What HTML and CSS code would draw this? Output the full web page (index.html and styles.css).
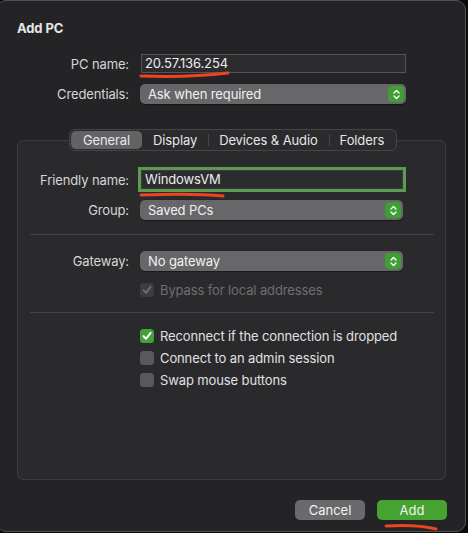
FILE: index.html
```html
<!DOCTYPE html>
<html>
<head>
<meta charset="utf-8">
<link rel="stylesheet" href="styles.css">
</head>
<body>
<div class="window">
  <h1 class="title">Add PC</h1>

  <div class="form top-form">
    <span class="label">PC name:</span>
    <div class="field">20.57.136.254</div>
    <span class="label">Credentials:</span>
    <div class="popup">Ask when required
      <span class="stepper"><svg width="15" height="15" viewBox="0 0 15 15"><path d="M5 6 L7.5 3.6 L10 6 M5 9 L7.5 11.4 L10 9" fill="none" stroke="#fff" stroke-width="1.4" stroke-linecap="round" stroke-linejoin="round"/></svg></span>
    </div>
  </div>

  <div class="tabs">
    <span class="tab selected">General</span>
    <span class="tab">Display</span>
    <span class="tab sep">Devices &amp; Audio</span>
    <span class="tab sep">Folders</span>
  </div>

  <div class="groupbox">
    <div class="form">
      <span class="label">Friendly name:</span>
      <div class="field focused">WindowsVM</div>
      <span class="label">Group:</span>
      <div class="popup">Saved PCs
        <span class="stepper"><svg width="15" height="15" viewBox="0 0 15 15"><path d="M5 6 L7.5 3.6 L10 6 M5 9 L7.5 11.4 L10 9" fill="none" stroke="#fff" stroke-width="1.4" stroke-linecap="round" stroke-linejoin="round"/></svg></span>
      </div>
    </div>
    <hr class="sep-line first">
    <div class="form">
      <span class="label">Gateway:</span>
      <div class="popup">No gateway
        <span class="stepper"><svg width="15" height="15" viewBox="0 0 15 15"><path d="M5 6 L7.5 3.6 L10 6 M5 9 L7.5 11.4 L10 9" fill="none" stroke="#fff" stroke-width="1.4" stroke-linecap="round" stroke-linejoin="round"/></svg></span>
      </div>
      <span></span>
      <div class="check disabled"><span class="box on"><svg width="14" height="14" viewBox="0 0 14 14"><path d="M3.5 7.3 L6 9.8 L10.6 3.8" fill="none" stroke="#6c6c6e" stroke-width="2" stroke-linecap="round" stroke-linejoin="round"/></svg></span>Bypass for local addresses</div>
    </div>
    <hr class="sep-line second">
    <div class="checks">
      <div class="check"><span class="box on green"><svg width="14" height="14" viewBox="0 0 14 14"><path d="M3.5 7.3 L6 9.8 L10.6 3.8" fill="none" stroke="#fff" stroke-width="2" stroke-linecap="round" stroke-linejoin="round"/></svg></span>Reconnect if the connection is dropped</div>
      <div class="check"><span class="box"></span>Connect to an admin session</div>
      <div class="check"><span class="box"></span>Swap mouse buttons</div>
    </div>
  </div>

  <div class="buttons">
    <button class="btn">Cancel</button>
    <button class="btn primary">Add</button>
  </div>

  <svg class="scribble s1" width="100" height="10" viewBox="0 0 100 10"><path d="M2 6 C 30 7, 60 6.5, 89 3" fill="none" stroke="#ee4420" stroke-width="3" stroke-linecap="round"/></svg>
  <svg class="scribble s2" width="100" height="10" viewBox="0 0 100 10"><path d="M2 4 C 30 3, 60 2.5, 84 5" fill="none" stroke="#ee4420" stroke-width="3" stroke-linecap="round"/></svg>
  <svg class="scribble s3" width="60" height="10" viewBox="0 0 60 10"><path d="M2 3 C 20 2, 40 3, 52 6" fill="none" stroke="#ee4420" stroke-width="3" stroke-linecap="round"/></svg>
</div>
</body>
</html>
```

FILE: styles.css
```css
* { box-sizing: border-box; }
html, body { margin: 0; padding: 0; background: #0b0b0c; }
body {
  font-family: "Inter", "Liberation Sans", sans-serif;
  font-size: 13px;
  letter-spacing: -0.12px;
  color: #dedee0;
  width: 468px;
  height: 533px;
  overflow: hidden;
}
.window {
  position: relative;
  margin-left: -4px;
  width: 470px;
  height: 532px;
  background: #242426;
  border: 1px solid #505052;
  border-radius: 10px;
  padding: 19px 18px 0 20px;
}
.title {
  margin: 0;
  font-size: 13px;
  font-weight: 700;
  line-height: 16px;
  color: #e6e6e8;
}
.form {
  display: grid;
  grid-template-columns: 112px 266px;
  column-gap: 11px;
  row-gap: 11px;
  align-items: center;
}
.top-form { margin-top: 18px; }
.label {
  text-align: right;
  line-height: 16px;
  color: #d6d6d8;
}
.field {
  height: 19px;
  line-height: 17px;
  padding: 0 3px;
  background: #2c2c2e;
  border: 1px solid #545456;
  color: #ececee;
}
.top-form .field { margin-left: 1px; }
.popup {
  position: relative;
  height: 20px;
  line-height: 20px;
  padding: 0 8px;
  background: #676769;
  border-radius: 5px;
  color: #f0f0f0;
  box-shadow: 0 0.5px 1px rgba(0,0,0,0.4);
}
.stepper {
  position: absolute;
  right: 2px;
  top: 2px;
  width: 16px;
  height: 16px;
  border-radius: 4px;
  background: #3f9f35;
  display: flex;
  align-items: center;
  justify-content: center;
}
.stepper svg { display: block; }
.tabs {
  position: relative;
  z-index: 1;
  display: flex;
  width: max-content;
  margin: 25px 0 0 52px;
  height: 22px;
  padding: 1px;
  background: #2b2b2d;
  border: 1px solid #444446;
  border-radius: 6px;
  color: #e6e6e8;
}
.tab {
  position: relative;
  padding: 0 11px;
  line-height: 18px;
  height: 18px;
}
.tab.selected {
  background: #636365;
  border-radius: 5px;
  padding: 0 12px;
}
.tab.sep::before {
  content: "";
  position: absolute;
  left: 0;
  top: 3px;
  height: 12px;
  width: 1px;
  background: #48484a;
}
.groupbox {
  margin-top: -11px;
  width: 429px;
  height: 340px;
  background: #2a2a2c;
  border: 1px solid #3d3d3f;
  border-radius: 6px;
  padding-top: 29px;
}
.groupbox .form {
  grid-template-columns: 111px 263px;
}
.groupbox .field.focused {
  margin-left: 1px;
  box-shadow: 0 0 0 3px #5d9a52;
  border-color: #3a3a3c;
  background: #2c2c2e;
}
.sep-line {
  margin: 14px 11px 15px 12px;
  border: 0;
  height: 1px;
  background: #434345;
}
.sep-line.first { margin-bottom: 16px; }
.check {
  display: flex;
  align-items: center;
  gap: 6px;
  height: 16px;
  line-height: 16px;
  color: #e0e0e2;
}
.check.disabled { color: #6e6e70; }
.box {
  width: 14px;
  height: 14px;
  border-radius: 3.5px;
  background: #59595b;
  flex: none;
  display: flex;
}
.check.disabled .box { background: #3c3c3e; }
.box.green { background: #41a336; }
.box svg { display: block; }
.checks {
  display: flex;
  flex-direction: column;
  gap: 6px;
  padding-left: 122px;
}
.buttons {
  display: flex;
  justify-content: flex-end;
  gap: 12px;
  margin-top: 20px;
}
.btn {
  font: inherit;
  font-size: 13px;
  width: 70px;
  height: 20px;
  border: 0;
  border-radius: 5px;
  background: #6a6a6c;
  color: #f2f2f2;
  padding: 0;
  line-height: 20px;
}
.btn.primary { background: #46a331; }
.scribble { position: absolute; display: block; }
.s1 { left: 142px; top: 69px; }
.s2 { left: 142px; top: 190px; }
.s3 { left: 387px; top: 522px; }
```
